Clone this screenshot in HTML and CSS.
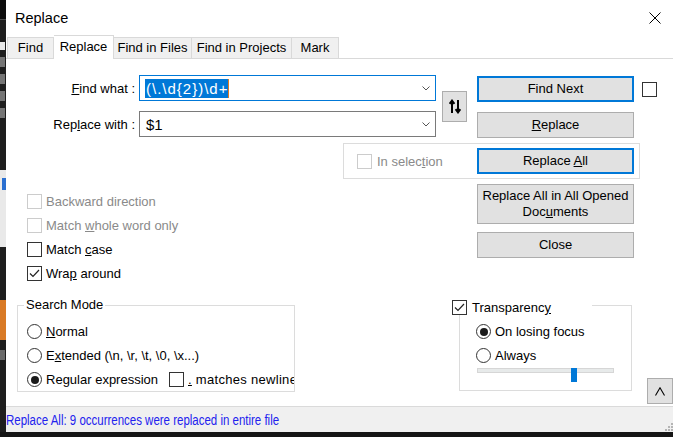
FILE: index.html
```html
<!DOCTYPE html>
<html>
<head>
<meta charset="utf-8">
<title>Replace</title>
<link rel="stylesheet" href="styles.css">
</head>
<body>
<div class="screen">
  <div class="strip">
    <div class="s-top"></div>
    <div class="s-dark1">
      <span class="frag fw"></span>
      <span class="frag"></span>
      <span class="frag"></span>
      <span class="frag"></span>
      <span class="frag"></span>
    </div>
    <div class="s-light"><span class="qm"></span></div>
    <div class="s-dark2"></div>
    <div class="s-orange"></div>
    <div class="s-dark3"><span class="frag fy"></span></div>
  </div>
  <div class="dialog">
    <div class="titlebar">
      <span class="title">Replace</span>
      <svg class="close" width="12" height="12" viewBox="0 0 12 12"><path d="M0.5 0.5L11.5 11.5M11.5 0.5L0.5 11.5" stroke="#000" stroke-width="1"/></svg>
    </div>
    <div class="tabs">
      <div class="tab t1">Find</div>
      <div class="tab active t2">Replace</div>
      <div class="tab t3">Find in Files</div>
      <div class="tab t4">Find in Projects</div>
      <div class="tab t5">Mark</div>
    </div>
    <div class="content">
      <div class="top">
        <div class="left">
          <div class="fields">
            <div class="lbl"><u>F</u>ind what :</div>
            <div class="combo focus">
              <span class="sel">(\.\d{2})\d+</span>
              <svg class="chev" width="8" height="5" viewBox="0 0 8 5"><path d="M0.5 0.5L4 4L7.5 0.5" fill="none" stroke="#555"/></svg>
            </div>
            <div class="swap">
              <svg width="12" height="15" viewBox="0 0 12 15"><path d="M3 14V2.5M0.6 4.8L3 1.6L5.4 4.8M9 1V12.5M6.6 10.2L9 13.4L11.4 10.2" fill="none" stroke="#000" stroke-width="2"/></svg>
            </div>
            <div class="lbl">Rep<u>l</u>ace with :</div>
            <div class="combo">
              <span class="val">$1</span>
              <svg class="chev" width="8" height="5" viewBox="0 0 8 5"><path d="M0.5 0.5L4 4L7.5 0.5" fill="none" stroke="#555"/></svg>
            </div>
          </div>
          <div class="selframe">
            <span class="chk dis"></span>
            <span class="distext">In selec<u>t</u>ion</span>
          </div>
          <div class="opts">
            <div class="opt"><span class="chk dis"></span><span class="distext">Backward direction</span></div>
            <div class="opt"><span class="chk dis"></span><span class="distext">Match <u>w</u>hole word only</span></div>
            <div class="opt"><span class="chk"></span><span>Match <u>c</u>ase</span></div>
            <div class="opt"><span class="chk on"><svg width="13" height="13" viewBox="0 0 13 13"><path d="M2 6.5L5 9.5L11 3" fill="none" stroke="#222" stroke-width="1.2"/></svg></span><span>Wra<u>p</u> around</span></div>
          </div>
        </div>
        <div class="right">
          <div class="btnrow">
            <div class="btn def"><span>Find Next</span></div>
            <span class="chk"></span>
          </div>
          <div class="btn"><span><u>R</u>eplace</span></div>
          <div class="btn def"><span>Replace <u>A</u>ll</span></div>
          <div class="btn tall"><span>Replace All in All Opened<br>Doc<u>u</u>ments</span></div>
          <div class="btn close-btn"><span>Close</span></div>
        </div>
      </div>
      <div class="bottom">
        <fieldset class="mode">
          <legend>Search Mode</legend>
          <div class="radios">
            <div class="opt"><span class="radio"></span><span><u>N</u>ormal</span></div>
            <div class="opt"><span class="radio"></span><span>E<u>x</u>tended (\n, \r, \t, \0, \x...)</span></div>
            <div class="opt clip"><span class="radio on"></span><span class="rx">Re<u>g</u>ular expression</span><span class="chk"></span><span class="nowrap"><u>.</u> matches newline</span></div>
          </div>
        </fieldset>
        <div class="trans">
          <div class="thead"><span class="chk on"><svg width="13" height="13" viewBox="0 0 13 13"><path d="M2 6.5L5 9.5L11 3" fill="none" stroke="#222" stroke-width="1.2"/></svg></span><span>Transparenc<u>y</u></span></div>
          <div class="tradios">
            <div class="opt"><span class="radio on"></span><span>On losing focus</span></div>
            <div class="opt"><span class="radio"></span><span>Always</span></div>
          </div>
          <div class="slider"><div class="track"></div><div class="thumb"></div></div>
        </div>
        <div class="up">
          <svg width="10" height="9" viewBox="0 0 10 9"><path d="M0.5 8.5L5 0.8L9.5 8.5" fill="none" stroke="#000" stroke-width="1.1"/></svg>
        </div>
      </div>
    </div>
    <div class="status">
      <span class="stext">Replace All: 9 occurrences were replaced in entire file</span>
      <svg class="grip" width="8" height="8" viewBox="0 0 8 8" fill="#b5b5b5"><rect x="6" y="0" width="2" height="2"/><rect x="3" y="3" width="2" height="2"/><rect x="6" y="3" width="2" height="2"/><rect x="0" y="6" width="2" height="2"/><rect x="3" y="6" width="2" height="2"/><rect x="6" y="6" width="2" height="2"/></svg>
    </div>
  </div>
</div>
</body>
</html>
```

FILE: styles.css
```css
* { box-sizing: border-box; }
html, body { margin: 0; padding: 0; }
body {
  width: 673px;
  height: 437px;
  overflow: hidden;
  background: #151515;
  font-family: "Liberation Sans", Arial, sans-serif;
  font-size: 13px;
  color: #000;
}
u { text-decoration: underline; text-underline-offset: 1px; }

.screen { display: flex; height: 432px; }

/* editor behind the dialog */
.strip { width: 6px; display: flex; flex-direction: column; overflow: hidden; }
.s-top { height: 20px; background: #0c0c0c; border-bottom: 1px solid #4a4a4a; }
.s-dark1 { height: 150px; background: #1e1e1e; display: flex; flex-direction: column; gap: 7px; padding-top: 22px; }
.frag { display: block; width: 5px; height: 10px; background: #9a9a9a; opacity: .7; }
.frag.fw { background: #e8e8e8; opacity: 1; height: 8px; }
.s-light { height: 77px; background: #e9e9e9; padding-top: 8px; }
.qm { display: block; width: 4px; height: 12px; background: #2a6fd0; margin-left: 2px; }
.s-dark2 { height: 53px; background: #1e1e1e; }
.s-orange { height: 40px; background: #d97a26; }
.s-dark3 { flex: 1; background: #1e1e1e; padding-top: 10px; }
.frag.fy { background: #8a8a8a; }

.dialog { width: 667px; display: flex; flex-direction: column; background: #fff; }

.titlebar {
  height: 35px;
  flex: none;
  display: flex;
  align-items: center;
  justify-content: space-between;
  padding: 0 12px 0 9px;
}
.title { font-size: 14.5px; }

.tabs {
  height: 24px;
  flex: none;
  display: flex;
  align-items: flex-end;
  padding-left: 1px;
  border-bottom: 1px solid #d9d9d9;
}
.tab {
  height: 21px;
  background: #f0f0f0;
  border: 1px solid #d9d9d9;
  border-bottom: none;
  border-left: none;
  text-align: center;
  line-height: 20px;
  white-space: nowrap;
}
.tab.t1 { border-left: 1px solid #d9d9d9; }
.tab.active {
  height: 24px;
  margin-bottom: -1px;
  background: #fff;
  line-height: 21px;
}
.t1 { width: 47px; }
.t2 { width: 60px; }
.t3 { width: 78px; }
.t4 { width: 100px; }
.t5 { width: 47px; }

.content { height: 347px; flex: none; display: flex; flex-direction: column; }

.top { display: flex; }
.left { width: 471px; flex: none; padding-top: 16px; }
.right { flex: 1; padding-top: 17px; display: flex; flex-direction: column; align-items: flex-start; }

.fields {
  display: grid;
  grid-template-columns: 129px 301px 31px;
  grid-template-rows: 26px 26px;
  row-gap: 10px;
}
.lbl { justify-self: end; align-self: center; white-space: nowrap; }
.combo {
  margin-left: 4px;
  width: 297px;
  height: 26px;
  border: 1px solid #7a7a7a;
  display: flex;
  align-items: center;
  padding-left: 5px;
  font-size: 15px;
}
.combo.focus { border-color: #0078d7; }
.sel {
  background: #0078d7;
  color: #fff;
  line-height: 19px;
  height: 19px;
  letter-spacing: 1px;
  border-right: 1px solid #e07a20;
  padding-left: 1px;
}
.val { padding-left: 1px; }
.chev { margin-left: auto; margin-right: 5px; }
.swap {
  grid-column: 3;
  grid-row: 1 / 3;
  align-self: center;
  margin-left: 6px;
  width: 25px;
  height: 31px;
  background: #e1e1e1;
  border: 1px solid #adadad;
  display: flex;
  align-items: center;
  justify-content: center;
}

.selframe {
  margin-top: 6px;
  margin-left: 337px;
  width: 297px;
  height: 36px;
  border: 1px solid #dcdcdc;
  display: flex;
  align-items: center;
  gap: 5px;
  padding-left: 13px;
}
.distext { color: #8a8a8a; white-space: nowrap; }

.opts { margin-top: 15px; margin-left: 21px; display: flex; flex-direction: column; gap: 9px; }
.opt { display: flex; align-items: center; gap: 4px; height: 15px; white-space: nowrap; }

.chk {
  flex: none;
  display: inline-flex;
  width: 15px;
  height: 15px;
  border: 1px solid #333;
  background: #fff;
}
.chk.dis { border-color: #cccccc; }
.chk svg { display: block; }

.radio {
  flex: none;
  width: 15px;
  height: 15px;
  border: 1px solid #333;
  border-radius: 50%;
  display: flex;
  align-items: center;
  justify-content: center;
  background: #fff;
}
.radio.on::after {
  content: "";
  width: 8px;
  height: 8px;
  border-radius: 50%;
  background: #1a1a1a;
}

.btn {
  width: 157px;
  height: 26px;
  background: #e1e1e1;
  border: 1px solid #adadad;
  display: flex;
  align-items: center;
  justify-content: center;
  text-align: center;
  line-height: 16px;
  margin-bottom: 10px;
  flex: none;
}
.btn span { display: block; }
.btn.def { border: 2px solid #0078d7; }
.btn.tall { height: 40px; margin-bottom: 8px; }
.btnrow { display: flex; align-items: center; gap: 8px; margin-bottom: 10px; }
.btnrow .btn { margin-bottom: 0; }

.bottom { display: flex; align-items: flex-start; margin-top: 16px; }

.mode {
  margin: 0 0 0 11px;
  width: 278px;
  min-width: 0;
  border: 1px solid #dcdcdc;
  padding: 0 0 4px 9px;
}
.mode legend { padding: 0 2px; margin-left: -3px; line-height: 16px; }
.radios { margin-top: 11px; display: flex; flex-direction: column; gap: 9px; }
.opt.clip { overflow: hidden; }
.rx { width: 119px; flex: none; }
.nowrap { white-space: nowrap; letter-spacing: 0.3px; }

.trans {
  margin: 8px 0 0 164px;
  width: 173px;
  height: 86px;
  border: 1px solid #dcdcdc;
}
.thead {
  margin: -6px 0 0 -8px;
  width: 140px;
  height: 15px;
  background: #fff;
  display: flex;
  align-items: center;
  gap: 5px;
}
.tradios { margin: 9px 0 0 16px; display: flex; flex-direction: column; gap: 9px; }
.slider { position: relative; margin: 5px 0 0 17px; width: 137px; height: 14px; }
.track { margin-top: 5px; height: 5px; background: #e7eaea; border: 1px solid #d6d6d6; }
.thumb { position: absolute; left: 94px; top: 0; width: 6px; height: 14px; background: #0078d7; }

.up {
  margin: 81px 0 0 15px;
  width: 26px;
  height: 26px;
  background: #e1e1e1;
  border: 1px solid #adadad;
  display: flex;
  align-items: center;
  justify-content: center;
}

.status {
  height: 26px;
  flex: none;
  background: #f0f0f0;
  border-top: 1px solid #dadada;
  display: flex;
  align-items: center;
  justify-content: space-between;
}
.stext {
  display: inline-block;
  font-size: 14px;
  color: #2222ee;
  white-space: nowrap;
  transform: scaleX(0.82);
  transform-origin: left center;
}
.grip { align-self: flex-end; margin-bottom: 1px; }
```
